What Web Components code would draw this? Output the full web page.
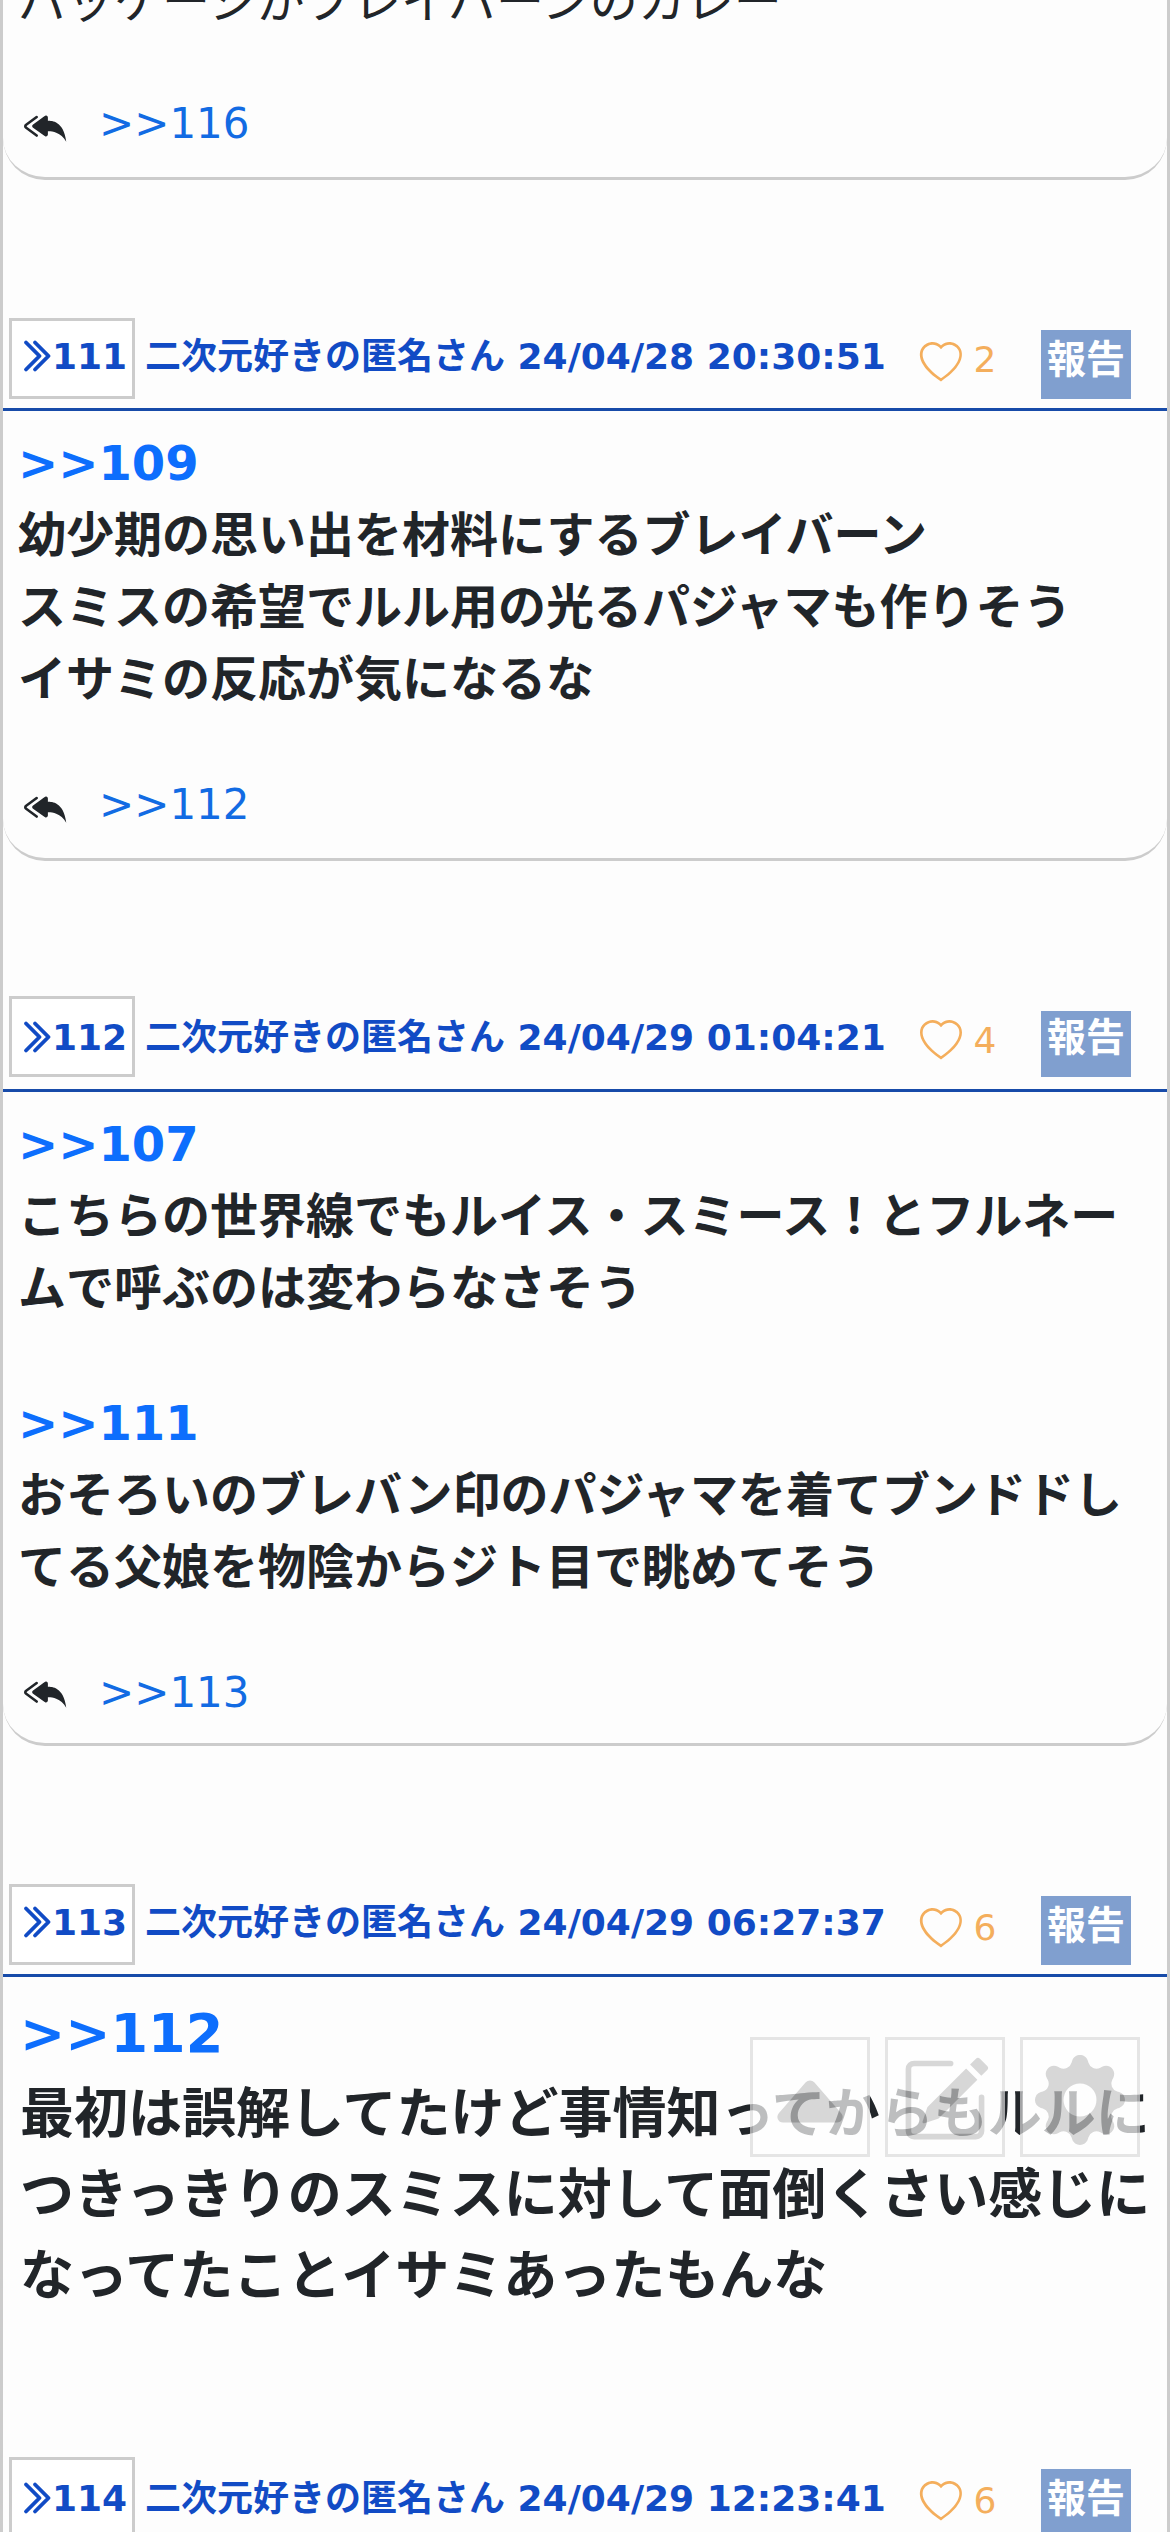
<!DOCTYPE html>
<html lang="ja">
<head>
<meta charset="utf-8">
<title>スレッド</title>
<style>
html,body{margin:0;padding:0;background:#fdfdfd}
body{height:2532px;overflow:hidden;font-family:"DejaVu Sans","Noto Sans CJK JP",sans-serif;color:#212529}
</style>
</head>
<body>
<board-thread>
  <res-body replies="116" style="--space:22px;--reply-gap:55px;margin-top:-51px;font-weight:400"><text-line>パッケージがブレイバーンのカレー</text-line></res-body>

  <res-header no="111" likes="2" style="margin-top:138px">二次元好きの匿名さん 24/04/28 20:30:51</res-header>
  <res-body replies="112" style="--space:22px"><anchor-link>&gt;&gt;109</anchor-link><text-line>幼少期の思い出を材料にするブレイバーン</text-line><text-line>スミスの希望でルル用の光るパジャマも作りそう</text-line><text-line>イサミの反応が気になるな</text-line></res-body>

  <res-header no="112" likes="4" style="margin-top:135px;--base:15px;--rule:15px;--report:15px;--like:18px">二次元好きの匿名さん 24/04/29 01:04:21</res-header>
  <res-body replies="113" style="--icon-top:9.5px"><anchor-link>&gt;&gt;107</anchor-link><text-line>こちらの世界線でもルイス・スミース！とフルネー</text-line><text-line>ムで呼ぶのは変わらなさそう</text-line><anchor-link style="margin-top:63px">&gt;&gt;111</anchor-link><text-line>おそろいのブレバン印のパジャマを着てブンドドし</text-line><text-line>てる父娘を物陰からジト目で眺めてそう</text-line></res-body>

  <res-header no="113" likes="6" style="margin-top:138px;--like:17px">二次元好きの匿名さん 24/04/29 06:27:37</res-header>
  <res-body style="font-size:54px;padding-left:17px"><anchor-link>&gt;&gt;112</anchor-link><text-line>最初は誤解してたけど事情知ってからもルルに</text-line><text-line>つきっきりのスミスに対して面倒くさい感じに</text-line><text-line>なってたことイサミあったもんな</text-line></res-body>

  <res-header no="114" likes="6" style="margin-top:140px;--base:15px;--like:17px">二次元好きの匿名さん 24/04/29 12:23:41</res-header>
</board-thread>
<floating-tools></floating-tools>

<script>
const ICONS = {
  chevrons: '<g stroke="currentColor" stroke-width=".7"><path d="M3.646 1.646a.5.5 0 0 1 .708 0l6 6a.5.5 0 0 1 0 .708l-6 6a.5.5 0 0 1-.708-.708L9.293 8 3.646 2.354a.5.5 0 0 1 0-.708z"/><path d="M7.646 1.646a.5.5 0 0 1 .708 0l6 6a.5.5 0 0 1 0 .708l-6 6a.5.5 0 0 1-.708-.708L13.293 8 7.646 2.354a.5.5 0 0 1 0-.708z"/></g>',
  heart: '<path d="m8 2.748-.717-.737C5.6.281 2.514.878 1.4 3.053c-.523 1.023-.641 2.5.314 4.385.92 1.815 2.834 3.989 6.286 6.357 3.452-2.368 5.365-4.542 6.286-6.357.955-1.886.838-3.362.314-4.385C13.486.878 10.4.28 8.717 2.01L8 2.748zM8 15C-7.333 4.868 3.279-3.04 7.824 1.143c.06.055.119.112.176.171a3.12 3.12 0 0 1 .176-.17C12.72-3.042 23.333 4.867 8 15z"/>',
  reply: '<path d="M8.021 11.9 3.453 8.62a.719.719 0 0 1 0-1.238L8.021 4.1a.716.716 0 0 1 1.079.619V6c1.5 0 6 0 7 8-2.5-4.5-7-4-7-4v1.281c0 .56-.606.898-1.079.62z"/><path d="M5.232 4.293a.5.5 0 0 1-.106.7L1.114 7.945a.5.5 0 0 1-.042.028.147.147 0 0 0 0 .252.503.503 0 0 1 .042.028l4.012 2.954a.5.5 0 1 1-.593.805L.539 9.073a1.147 1.147 0 0 1 0-1.946l3.994-2.94a.5.5 0 0 1 .699.106z"/>',
  up: '<path d="m7.247 4.86-4.796 5.481c-.566.647-.106 1.659.753 1.659h9.592a1 1 0 0 0 .753-1.659l-4.796-5.48a1 1 0 0 0-1.506 0z"/>',
  edit: '<path d="M15.502 1.94a.5.5 0 0 1 0 .706L14.459 3.69l-2-2L13.502.646a.5.5 0 0 1 .707 0l1.293 1.293zm-1.75 2.456-2-2L4.939 9.21a.5.5 0 0 0-.121.196l-.805 2.414a.25.25 0 0 0 .316.316l2.414-.805a.5.5 0 0 0 .196-.12l6.813-6.814z"/><path d="M1 13.5A1.5 1.5 0 0 0 2.5 15h11a1.5 1.5 0 0 0 1.5-1.5v-6a.5.5 0 0 0-1 0v6a.5.5 0 0 1-.5.5h-11a.5.5 0 0 1-.5-.5v-11a.5.5 0 0 1 .5-.5H9a.5.5 0 0 0 0-1H2.5A1.5 1.5 0 0 0 1 2.5v11z"/>',
  gear: '<path d="M9.405 1.05c-.413-1.4-2.397-1.4-2.81 0l-.1.34a1.464 1.464 0 0 1-2.105.872l-.31-.17c-1.283-.698-2.686.705-1.987 1.987l.169.311c.446.82.023 1.841-.872 2.105l-.34.1c-1.4.413-1.4 2.397 0 2.81l.34.1a1.464 1.464 0 0 1 .872 2.105l-.17.31c-.698 1.283.705 2.686 1.987 1.987l.311-.169a1.464 1.464 0 0 1 2.105.872l.1.34c.413 1.4 2.397 1.4 2.81 0l.1-.34a1.464 1.464 0 0 1 2.105-.872l.31.17c1.283.698 2.686-.705 1.987-1.987l-.169-.311a1.464 1.464 0 0 1 .872-2.105l.34-.1c1.4-.413 1.4-2.397 0-2.81l-.34-.1a1.464 1.464 0 0 1-.872-2.105l.17-.31c.698-1.283-.705-2.686-1.987-1.987l-.311.169a1.464 1.464 0 0 1-2.105-.872l-.1-.34zM8 10.93a2.929 2.929 0 1 1 0-5.86 2.929 2.929 0 0 1 0 5.858z"/>'
};
function define(name, render) {
  customElements.define(name, class extends HTMLElement {
    connectedCallback() {
      if (!this.shadowRoot) this.attachShadow({mode: 'open'}).innerHTML = render(this);
    }
  });
}
define('ui-icon', el => `<style>:host{display:block;flex:none}svg{display:block;width:100%;height:100%;overflow:visible}</style><svg viewBox="0 0 16 16" fill="currentColor">${ICONS[el.getAttribute('name')]}</svg>`);
define('board-thread', () => `<style>:host{display:flow-root;box-sizing:border-box;width:1170px;height:2532px;overflow:hidden;border:solid #ccc;border-width:0 3px;background:#fdfdfd}</style><slot></slot>`);
define('text-line', () => `<style>:host{display:block;line-height:1.5;white-space:nowrap}</style><slot></slot>`);
define('anchor-link', () => `<style>:host{display:block;line-height:1.5;color:#0d6efd}</style><slot></slot>`);
define('res-header', el => `<style>
:host{display:flex;align-items:flex-start;box-sizing:border-box;height:calc(81px + var(--rule,12px));padding:0 36px 0 6px;border-bottom:3px solid #174ba9;font-size:36px;line-height:54px;font-weight:700;color:#114bc5}
.no{display:flex;box-sizing:border-box;flex:none;width:126px;height:81px;border:3px solid #ccc;background:#fff;padding:calc(var(--base,12px) - 3px) 0 0 4.5px}
.no ui-icon{width:36px;height:36px;margin-top:8px}
.no span{margin-left:-.5px}
.who{flex:none;width:774.5px;margin-left:10px;padding-top:var(--base,12px);white-space:nowrap}
.like{display:flex;color:#f4ae5c;font-weight:400}
.like ui-icon{width:42px;height:42px;margin-top:24px}
.like span{margin:var(--like,15px) 0 0 12px}
.report{box-sizing:border-box;margin:var(--report,12px) 0 0 auto;height:calc(81px - var(--report,12px));padding:calc(15px - var(--report,12px)) 6px 0;background:#809fcf;color:#fff;font-size:39px}
</style><div class="no"><ui-icon name="chevrons"></ui-icon><span>${el.getAttribute('no')}</span></div><div class="who"><slot></slot></div><div class="like"><ui-icon name="heart"></ui-icon><span>${el.getAttribute('likes')}</span></div><div class="report">報告</div>`);
define('res-body', el => {
  const r = el.getAttribute('replies');
  return `<style>
:host{display:block;box-sizing:border-box;padding:16px 0 0 15px;font-size:48px;font-weight:700}
:host([replies]){padding-bottom:var(--space,19px);border-bottom:3px solid #ccc;border-radius:0 0 42px 42px}
.replies{display:flex;margin-top:var(--reply-gap,58px);padding-left:6px;font-size:42px;line-height:63px;font-weight:400}
.replies ui-icon{width:42px;height:42px;margin-top:var(--icon-top,12.5px)}
a{margin-left:33px;color:#126be3}
</style><slot></slot>${r ? `<div class="replies"><ui-icon name="reply"></ui-icon><a>&gt;&gt;${r}</a></div>` : ''}`;
});
define('floating-tools', () => `<style>
:host{position:absolute;left:750px;top:2037px;display:flex;gap:15px;opacity:.7;color:#c8c8c8}
div{box-sizing:border-box;width:120px;height:120px;border:3px solid #dbdbdb;background:#fff;padding:15px 12px}
ui-icon{width:90px;height:90px}
</style><div><ui-icon name="up"></ui-icon></div><div><ui-icon name="edit"></ui-icon></div><div><ui-icon name="gear"></ui-icon></div>`);
</script>
</body>
</html>
